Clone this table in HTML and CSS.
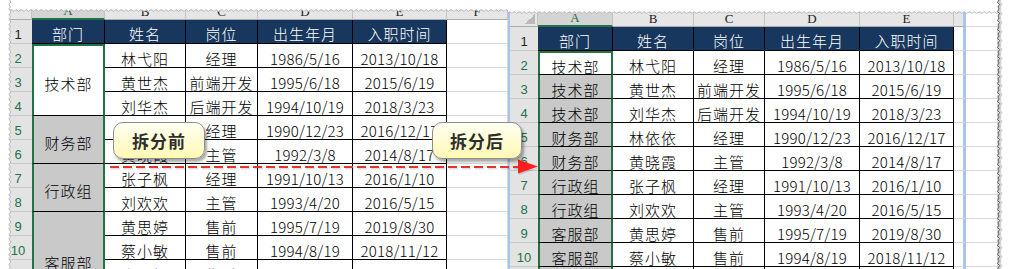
FILE: index.html
```html
<!DOCTYPE html>
<html lang="zh-CN">
<head>
<meta charset="utf-8">
<title>拆分前 / 拆分后</title>
<link rel="stylesheet" href="styles.css">
</head>
<body>
<div class="stage">
  <div class="sheet sheet-left">
    <div class="grid grid-left">
      <div class="ch"></div><div class="ch sel">A</div><div class="ch">B</div><div class="ch">C</div><div class="ch">D</div><div class="ch">E</div><div class="ch">F</div>

      <div class="rh">1</div><div class="hd">部门</div><div class="hd">姓名</div><div class="hd">岗位</div><div class="hd">出生年月</div><div class="hd">入职时间</div><div class="gc"></div>

      <div class="rh on">2</div><div class="c sa active span3">技术部</div><div class="c">林弋阳</div><div class="c">经理</div><div class="c n">1986/5/16</div><div class="c n">2013/10/18</div><div class="gc"></div>
      <div class="rh on">3</div><div class="c">黄世杰</div><div class="c">前端开发</div><div class="c n">1995/6/18</div><div class="c n">2015/6/19</div><div class="gc"></div>
      <div class="rh on">4</div><div class="c">刘华杰</div><div class="c">后端开发</div><div class="c n">1994/10/19</div><div class="c n">2018/3/23</div><div class="gc"></div>
      <div class="rh on">5</div><div class="c sa span2">财务部</div><div class="c">林依依</div><div class="c">经理</div><div class="c n">1990/12/23</div><div class="c n">2016/12/17</div><div class="gc"></div>
      <div class="rh on">6</div><div class="c">黄晓霞</div><div class="c">主管</div><div class="c n">1992/3/8</div><div class="c n">2014/8/17</div><div class="gc"></div>
      <div class="rh on">7</div><div class="c sa span2">行政组</div><div class="c">张子枫</div><div class="c">经理</div><div class="c n">1991/10/13</div><div class="c n">2016/1/10</div><div class="gc"></div>
      <div class="rh on">8</div><div class="c">刘欢欢</div><div class="c">主管</div><div class="c n">1993/4/20</div><div class="c n">2016/5/15</div><div class="gc"></div>
      <div class="rh on">9</div><div class="c sa span4">客服部</div><div class="c">黄思婷</div><div class="c">售前</div><div class="c n">1995/7/19</div><div class="c n">2019/8/30</div><div class="gc"></div>
      <div class="rh on">10</div><div class="c">蔡小敏</div><div class="c">售前</div><div class="c n">1994/8/19</div><div class="c n">2018/11/12</div><div class="gc"></div>
      <div class="rh on">11</div><div class="c">张丽娟</div><div class="c">售后</div><div class="c n">1996/3/12</div><div class="c n">2019/10/8</div><div class="gc"></div>
    </div>
  </div>

  <div class="sheet sheet-right">
    <div class="grid grid-right">
      <div class="ch corner"></div><div class="ch sel">A</div><div class="ch">B</div><div class="ch">C</div><div class="ch">D</div><div class="ch">E</div><div class="ch bar"></div><div class="ch blank"></div>

      <div class="rh">1</div><div class="hd">部门</div><div class="hd">姓名</div><div class="hd">岗位</div><div class="hd">出生年月</div><div class="hd">入职时间</div><div class="gc bar"></div><div class="gc"></div>

      <div class="rh on">2</div><div class="c sa active">技术部</div><div class="c">林弋阳</div><div class="c">经理</div><div class="c n">1986/5/16</div><div class="c n">2013/10/18</div><div class="gc bar"></div><div class="gc"></div>
      <div class="rh on">3</div><div class="c sa">技术部</div><div class="c">黄世杰</div><div class="c">前端开发</div><div class="c n">1995/6/18</div><div class="c n">2015/6/19</div><div class="gc bar"></div><div class="gc"></div>
      <div class="rh on">4</div><div class="c sa">技术部</div><div class="c">刘华杰</div><div class="c">后端开发</div><div class="c n">1994/10/19</div><div class="c n">2018/3/23</div><div class="gc bar"></div><div class="gc"></div>
      <div class="rh on">5</div><div class="c sa">财务部</div><div class="c">林依依</div><div class="c">经理</div><div class="c n">1990/12/23</div><div class="c n">2016/12/17</div><div class="gc bar"></div><div class="gc"></div>
      <div class="rh on">6</div><div class="c sa">财务部</div><div class="c">黄晓霞</div><div class="c">主管</div><div class="c n">1992/3/8</div><div class="c n">2014/8/17</div><div class="gc bar"></div><div class="gc"></div>
      <div class="rh on">7</div><div class="c sa">行政组</div><div class="c">张子枫</div><div class="c">经理</div><div class="c n">1991/10/13</div><div class="c n">2016/1/10</div><div class="gc bar"></div><div class="gc"></div>
      <div class="rh on">8</div><div class="c sa">行政组</div><div class="c">刘欢欢</div><div class="c">主管</div><div class="c n">1993/4/20</div><div class="c n">2016/5/15</div><div class="gc bar"></div><div class="gc"></div>
      <div class="rh on">9</div><div class="c sa">客服部</div><div class="c">黄思婷</div><div class="c">售前</div><div class="c n">1995/7/19</div><div class="c n">2019/8/30</div><div class="gc bar"></div><div class="gc"></div>
      <div class="rh on">10</div><div class="c sa">客服部</div><div class="c">蔡小敏</div><div class="c">售前</div><div class="c n">1994/8/19</div><div class="c n">2018/11/12</div><div class="gc bar"></div><div class="gc"></div>
      <div class="rh on">11</div><div class="c sa">客服部</div><div class="c">张丽娟</div><div class="c">售后</div><div class="c n">1996/3/12</div><div class="c n">2019/10/8</div><div class="gc bar"></div><div class="gc"></div>
    </div>
  </div>

  <svg class="overlay" width="1010" height="269" viewBox="0 0 1010 269" aria-hidden="true">
    <defs>
      <pattern id="tearTopL" x="0" y="0" width="10" height="14" patternUnits="userSpaceOnUse">
        <path d="M0 0H10V10L8.5 11.5L6 9.5L4 11.5L2 9.8L0 10Z" fill="#fff"/>
        <path d="M0 10L2 9.8L4 11.5L6 9.5L8.5 11.5L10 10" fill="none" stroke="#b5b5b5" stroke-width="1"/>
      </pattern>
      <pattern id="tearTopR" x="508" y="0" width="10" height="16" patternUnits="userSpaceOnUse">
        <path d="M0 0H10V12.5L8.5 13.5L6 11.5L4 13.5L2 11.8L0 12.5Z" fill="#fff"/>
        <path d="M0 12.5L2 11.8L4 13.5L6 11.5L8.5 13.5L10 12.5" fill="none" stroke="#b5b5b5" stroke-width="1"/>
      </pattern>
      <pattern id="tearLeft" x="0" y="0" width="12" height="10" patternUnits="userSpaceOnUse">
        <path d="M0 0H9.5L11 2L9 4.5L10.5 7L9 8.5L9.5 10H0Z" fill="#fff"/>
        <path d="M9.5 0L11 2L9 4.5L10.5 7L9 8.5L9.5 10" fill="none" stroke="#b5b5b5" stroke-width="1"/>
      </pattern>
      <pattern id="tearRight" x="994" y="0" width="16" height="9" patternUnits="userSpaceOnUse">
        <path d="M5 0L3.5 2.5L5.5 4.5L4 7L5 9H16V0Z" fill="#fff"/>
        <path d="M6.5 0L5 2.5L7 4.5L5.5 7L6.5 9" fill="none" stroke="rgba(0,0,0,0.18)" stroke-width="2.5"/>
        <path d="M5 0L3.5 2.5L5.5 4.5L4 7L5 9" fill="none" stroke="#5a5a5a" stroke-width="1"/>
      </pattern>
    </defs>
    <rect x="0" y="0" width="508" height="14" fill="url(#tearTopL)"/>
    <rect x="508" y="0" width="492" height="16" fill="url(#tearTopR)"/>
    <rect x="0" y="0" width="12" height="269" fill="url(#tearLeft)"/>
    <rect x="994" y="0" width="16" height="269" fill="url(#tearRight)"/>

    <line x1="111" y1="168.5" x2="520" y2="168.5" stroke="rgba(0,0,0,0.12)" stroke-width="2" stroke-dasharray="9 4"/>
    <line x1="110" y1="167" x2="519" y2="167" stroke="#e8322e" stroke-width="2" stroke-dasharray="9 4"/>
    <polygon points="519,171 539,168 519,175" fill="rgba(0,0,0,0.15)"/>
    <polygon points="518,159.5 538,166.5 518,173.5" fill="#ff1f1f"/>
  </svg>

  <div class="callout callout-before">拆分前</div>
  <div class="callout callout-after">拆分后</div>
</div>
</body>
</html>
```

FILE: styles.css
```css
* {
  box-sizing: border-box;
  margin: 0;
  padding: 0;
}

body {
  margin: 0;
  background: #ffffff;
  font-family: "Noto Sans CJK SC", "Noto Sans", sans-serif;
}

.stage {
  position: relative;
  width: 1010px;
  height: 269px;
  overflow: hidden;
  display: flex;
  align-items: flex-start;
  background: #ffffff;
}

.sheet-left {
  margin-left: 9px;
  padding-top: 9px;
}

.sheet-right {
  padding-top: 12px;
}

.grid {
  display: grid;
  grid-auto-rows: 24px;
}

.grid-left {
  grid-template-columns: 23px 73px 81px 72px 95px 94px 61px;
  grid-template-rows: 11px repeat(11, 24px);
}

.grid-right {
  border-left: 2px solid #a9c5ea;
  grid-template-columns: 28px 75px 81px 71px 95px 94px 12px 32px;
  grid-template-rows: 15px repeat(11, 24px);
}

/* column headers */
.ch {
  background: #e6e6e6;
  border-right: 1px solid #c4c4c4;
  border-bottom: 1px solid #ababab;
  font: 13px/13px "Liberation Serif", serif;
  color: #222;
  display: flex;
  align-items: flex-end;
  justify-content: center;
  padding-bottom: 1px;
  overflow: hidden;
}

.ch.sel {
  background: #d4d4d4;
  color: #1e6b40;
  border-bottom: 2px solid #217346;
}

.ch.corner {
  background:
    linear-gradient(135deg, transparent 50%, #b9b9b9 50%) no-repeat right 2px bottom 2px / 10px 10px,
    #e6e6e6;
}

.ch.bar {
  border-right: 3px solid #a9c5ea;
}

.ch.blank {
  background: #ffffff;
  border-right: none;
  border-bottom: 1px solid #d9d9d9;
}

/* row headers */
.rh {
  background: #e3e3e3;
  border-bottom: 1px solid #c8c8c8;
  font: 13px/13px "Liberation Sans", sans-serif;
  color: #222;
  display: flex;
  align-items: flex-end;
  justify-content: center;
  padding-bottom: 2px;
}

.grid-left .rh {
  padding-right: 5px;
}

.rh.on {
  color: #217346;
}

/* table header row */
.hd {
  background: #17375e;
  color: #ffffff;
  border-right: 1px solid #000;
  border-bottom: 1px solid #000;
  display: flex;
  align-items: center;
  justify-content: center;
  font-size: 15px;
  font-weight: 300;
  line-height: 1;
  letter-spacing: 1px;
  padding-top: 3px;
}

/* data cells */
.c {
  background: #ffffff;
  color: #000;
  border-right: 1px solid #000;
  border-bottom: 1px solid #000;
  display: flex;
  align-items: center;
  justify-content: center;
  font-size: 15px;
  font-weight: 300;
  line-height: 1;
  letter-spacing: 1px;
  padding-top: 5px;
  white-space: nowrap;
}

.c.n {
  letter-spacing: 0.2px;
}

.c.sa {
  background: #c9c9c9;
  border-left: 2px solid #217346;
  border-right: 2px solid #217346;
}

.c.sa.active {
  background: #ffffff;
  border-top: 2px solid #217346;
}

.span2 { grid-row: span 2; }
.span3 { grid-row: span 3; }
.span4 { grid-row: span 4; }

/* empty grid cells */
.gc {
  background: #ffffff;
  border-right: 1px solid #d9d9d9;
  border-bottom: 1px solid #d9d9d9;
}

.gc.bar {
  border-right: 3px solid #a9c5ea;
}

/* decorations over the sheets */
.overlay {
  position: absolute;
  left: 0;
  top: 0;
  pointer-events: none;
}

.callout {
  position: absolute;
  top: 122px;
  height: 37px;
  display: flex;
  align-items: center;
  justify-content: center;
  border: 1px solid #8e8e8e;
  border-radius: 10px;
  background: linear-gradient(#fffff2, #fff8b4);
  box-shadow: 2px 3px 3px rgba(0, 0, 0, 0.35);
  font-size: 17px;
  font-weight: 700;
  color: #2e2e2e;
  letter-spacing: 1px;
}

.callout-before {
  left: 113px;
  width: 92px;
}

.callout-after {
  left: 432px;
  width: 90px;
}
```
